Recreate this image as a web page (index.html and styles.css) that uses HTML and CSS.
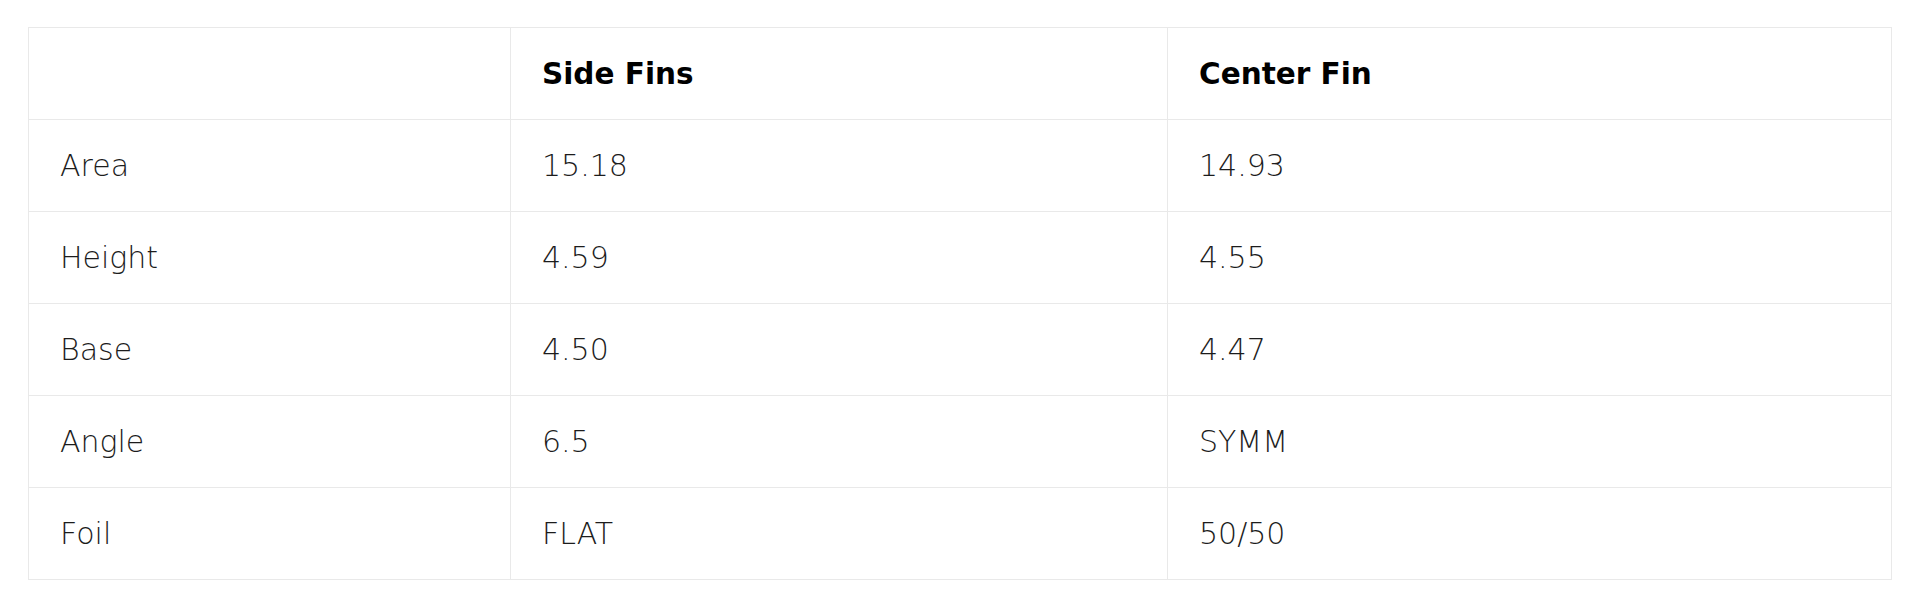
FILE: index.html
```html
<!DOCTYPE html>
<html lang="en">
<head>
<meta charset="utf-8">
<title>Fin Specs</title>
<link rel="stylesheet" href="styles.css">
</head>
<body>
<div class="wrap">
  <table class="specs">
    <colgroup>
      <col class="c1">
      <col class="c2">
      <col class="c3">
    </colgroup>
    <thead>
      <tr><th></th><th>Side Fins</th><th>Center Fin</th></tr>
    </thead>
    <tbody>
      <tr><td>Area</td><td>15.18</td><td>14.93</td></tr>
      <tr><td>Height</td><td>4.59</td><td>4.55</td></tr>
      <tr><td>Base</td><td>4.50</td><td>4.47</td></tr>
      <tr><td>Angle</td><td>6.5</td><td>SYMM</td></tr>
      <tr><td>Foil</td><td>FLAT</td><td>50/50</td></tr>
    </tbody>
  </table>
</div>
</body>
</html>
```
FILE: styles.css
```css
html, body {
  margin: 0;
  padding: 0;
  background: #ffffff;
}
.wrap {
  padding: 27px 28px 28px 28px;
}
.specs {
  width: 100%;
  border-collapse: collapse;
  table-layout: fixed;
  font-family: "DejaVu Sans", "Liberation Sans", sans-serif;
  font-size: 29px;
  color: #1c1c1c;
  border: 1px solid #e9e9e9;
}
.c1 { width: 482px; }
.c2 { width: 657px; }
.specs th,
.specs td {
  border: 1px solid #e9e9e9;
  height: 92px;
  padding: 0 32px 0 31px;
  text-align: left;
  vertical-align: middle;
  box-sizing: border-box;
}
.specs th {
  font-weight: 700;
  font-size: 29.5px;
  color: #000000;
}
.specs td {
  font-weight: 300;
  font-size: 30px;
}
```
